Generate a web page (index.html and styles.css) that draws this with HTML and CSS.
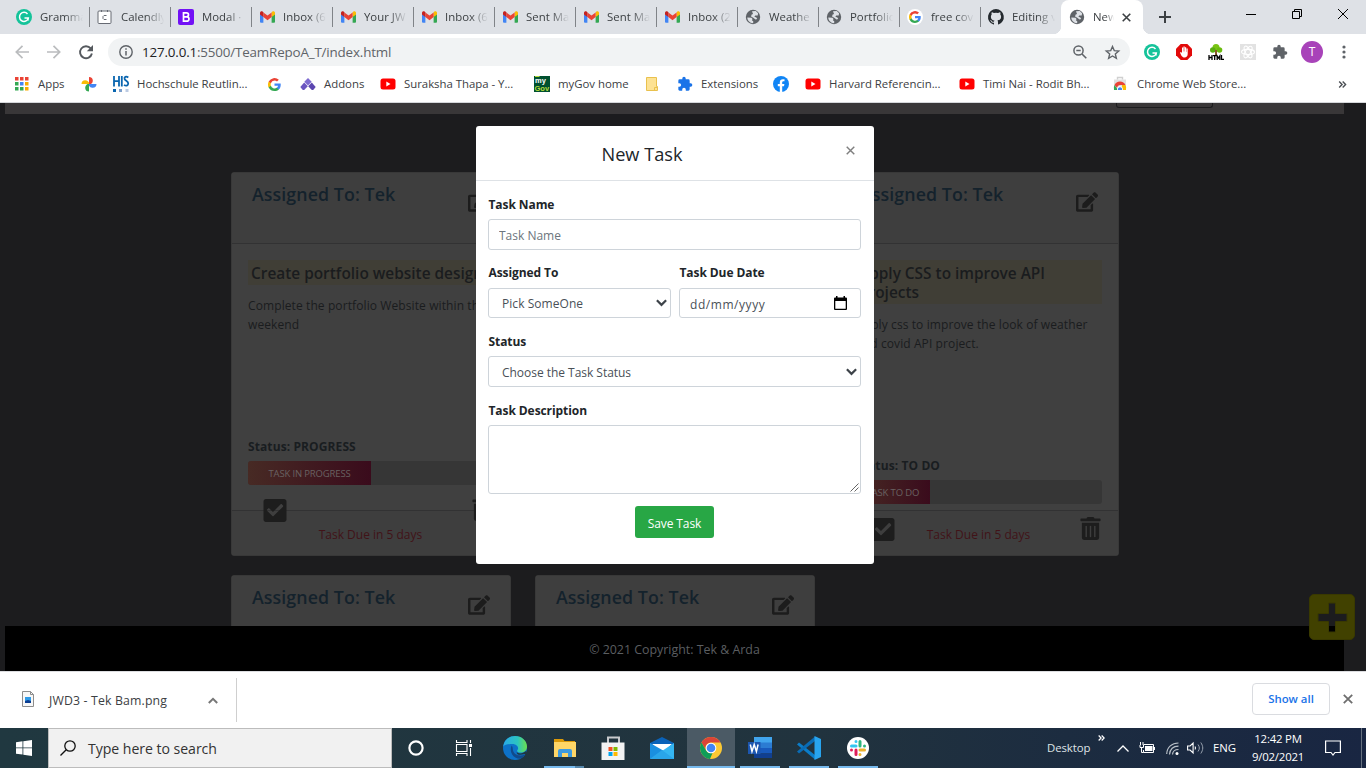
FILE: index.html
```html
<!DOCTYPE html>
<html lang="en">
<head>
<meta charset="utf-8">
<title>New Task</title>
<link rel="stylesheet" href="styles.css">
</head>
<body>
<svg class="defs" aria-hidden="true">
  <symbol id="gmail" viewBox="0 0 16 12"><path fill="#4285f4" d="M1 12h2.6V5.3L0 2.6V11a1 1 0 0 0 1 1z"/><path fill="#34a853" d="M12.4 12H15a1 1 0 0 0 1-1V2.6l-3.6 2.7z"/><path fill="#fbbc04" d="M12.4 1.2v4.9L16 3.4V1.8C16 .2 14.200-.6 13 .4z"/><path fill="#ea4335" d="M3.600 6.100V1.200L8 4.500l4.400-3.300v4.900L8 9.400z"/><path fill="#c5221f" d="M0 1.800v1.600l3.600 2.700V1.200L3 .4C1.800-.6 0 .2 0 1.800z"/></symbol>
  <symbol id="globe" viewBox="0 0 16 16"><circle cx="8" cy="8" r="7.200" fill="#5f6368"/><path fill="#dee1e6" d="M2.300 8.500l4.200.2 1 1.300-.6 1.500 1.300.5v2.300C4.500 14 2.300 11.300 2.300 8.500zM7 2.300l3.800-.2 2.300 2.100-.4 2.400-2.500-.2-.8 1.300 2 .7.8 1.500-1.700.5-2.600-1.800-1.700-.9.2-1.900 1.600-.8z"/></symbol>
  <symbol id="google" viewBox="0 0 24 24"><path fill="#4285f4" d="M23.500 12.300c0-.9-.1-1.600-.2-2.300H12v4.500h6.500a5.500 5.500 0 0 1-2.400 3.700v3h3.900c2.200-2.100 3.500-5.100 3.500-8.900z"/><path fill="#34a853" d="M12 24c3.200 0 6-1.100 8-2.900l-3.900-3a7.200 7.200 0 0 1-10.800-3.800h-4v3.100A12 12 0 0 0 12 24z"/><path fill="#fbbc05" d="M5.300 14.300a7.200 7.200 0 0 1 0-4.600V6.600h-4a12 12 0 0 0 0 10.800z"/><path fill="#ea4335" d="M12 4.800c1.800 0 3.300.6 4.600 1.800L20 3.200A12 12 0 0 0 1.300 6.600l4 3.100A7.100 7.100 0 0 1 12 4.800z"/></symbol>
  <symbol id="grammarly" viewBox="0 0 16 16"><circle cx="8" cy="8" r="8" fill="#15c39a"/><path fill="none" stroke="#fff" stroke-width="1.500" d="M11.500 5A4.500 4.500 0 1 0 12 10M8.500 9h3.800l-.5 2.500"/></symbol>
  <symbol id="youtube" viewBox="0 0 16 12"><rect width="15" height="11" x=".5" y=".5" rx="2.500" fill="#f00"/><path fill="#fff" d="M6.300 3.500v5l4.200-2.500z"/></symbol>
  <symbol id="puzzle" viewBox="0 0 24 24"><path fill="currentColor" d="M20.500 11H19V7a2 2 0 0 0-2-2h-4V3.500a2.500 2.500 0 0 0-5 0V5H4a2 2 0 0 0-2 2v3.800h1.500a2.700 2.700 0 0 1 0 5.400H2V20c0 1.100.9 2 2 2h3.800v-1.500a2.700 2.700 0 0 1 5.400 0V22H17a2 2 0 0 0 2-2v-4h1.500a2.500 2.500 0 0 0 0-5z"/></symbol>
  <symbol id="edit" viewBox="0 0 576 512"><path fill="currentColor" d="M402.600 83.200l90.200 90.200c3.800 3.800 3.800 10 0 13.800L274.400 405.600l-92.800 10.300c-12.400 1.400-22.900-9.100-21.500-21.500l10.300-92.800L388.800 83.200c3.800-3.800 10-3.800 13.800 0zm162-22.900l-48.800-48.800c-15.200-15.200-39.900-15.200-55.200 0l-35.400 35.400c-3.800 3.800-3.800 10 0 13.800l90.200 90.200c3.800 3.800 10 3.800 13.800 0l35.400-35.400c15.200-15.300 15.200-40 0-55.200zM384 346.200V448H64V128h229.800c3.200 0 6.200-1.300 8.500-3.500l40-40c7.600-7.600 2.200-20.500-8.500-20.500H48C21.500 64 0 85.500 0 112v352c0 26.500 21.500 48 48 48h352c26.500 0 48-21.500 48-48V306.200c0-10.700-12.900-16-20.500-8.500l-40 40c-2.200 2.300-3.500 5.300-3.500 8.500z"/></symbol>
  <symbol id="check" viewBox="0 0 448 448"><path fill="currentColor" d="M400 448H48c-26.500 0-48-21.500-48-48V48C0 21.500 21.500 0 48 0h352c26.500 0 48 21.500 48 48v352c0 26.500-21.500 48-48 48zM195.700 332.900l184-184c6.200-6.200 6.200-16.400 0-22.600l-22.600-22.600c-6.200-6.200-16.400-6.200-22.600 0L184.400 253.800l-70.100-70.100c-6.200-6.200-16.400-6.200-22.600 0l-22.600 22.600c-6.200 6.200-6.200 16.400 0 22.600l104 104c6.200 6.200 16.400 6.200 22.600 0z"/></symbol>
  <symbol id="trash" viewBox="0 0 448 512"><path fill="currentColor" d="M32 464a48 48 0 0 0 48 48h288a48 48 0 0 0 48-48V128H32zm272-256a16 16 0 0 1 32 0v224a16 16 0 0 1-32 0zm-96 0a16 16 0 0 1 32 0v224a16 16 0 0 1-32 0zm-96 0a16 16 0 0 1 32 0v224a16 16 0 0 1-32 0zM432 32H312l-9.400-18.700A24 24 0 0 0 281.100 0H166.800a24 24 0 0 0-21.400 13.300L136 32H16A16 16 0 0 0 0 48v32a16 16 0 0 0 16 16h416a16 16 0 0 0 16-16V48a16 16 0 0 0-16-16z"/></symbol>
  <symbol id="chev" viewBox="0 0 10 7"><path fill="none" stroke="currentColor" stroke-width="2" d="M.8 1L5 5.200 9.200 1"/></symbol>
  <symbol id="dbl" viewBox="0 0 9 8"><path fill="none" stroke="currentColor" stroke-width="1.600" d="M.7.7L4 4 .7 7.300M4.700.7L8 4 4.700 7.300"/></symbol>
  <symbol id="cross" viewBox="0 0 10 10"><path fill="none" stroke="currentColor" stroke-width="1.800" d="M.8.800l8.400 8.400M9.200.800L.8 9.200"/></symbol>
</svg>

<header class="tabs">
  <div class="tab"><svg class="fav"><use href="#grammarly"/></svg><span>Gramma</span></div>
  <div class="tab"><svg class="fav" viewBox="0 0 16 16"><rect x="1" y="2" width="13" height="12.500" rx="1" fill="#fff" stroke="#666a73"/><path stroke="#666a73" fill="none" d="M4.500 1v2M10.500 1v2M9.500 6.500H7L6 7.500v2l1 1h2.500"/></svg><span>Calendly</span></div>
  <div class="tab"><svg class="fav" viewBox="0 0 16 16"><rect width="16" height="16" rx="2" fill="#7211f5"/><path fill="none" stroke="#fff" stroke-width="1.700" d="M5.500 3.800h3a2 2 0 0 1 0 4h-3zM5.500 7.800h3.300a2.200 2.200 0 0 1 0 4.400H5.500z"/></svg><span>Modal ·</span></div>
  <div class="tab"><svg class="fav mail"><use href="#gmail"/></svg><span>Inbox (6</span></div>
  <div class="tab"><svg class="fav mail"><use href="#gmail"/></svg><span>Your JW</span></div>
  <div class="tab"><svg class="fav mail"><use href="#gmail"/></svg><span>Inbox (6</span></div>
  <div class="tab"><svg class="fav mail"><use href="#gmail"/></svg><span>Sent Ma</span></div>
  <div class="tab"><svg class="fav mail"><use href="#gmail"/></svg><span>Sent Ma</span></div>
  <div class="tab"><svg class="fav mail"><use href="#gmail"/></svg><span>Inbox (2</span></div>
  <div class="tab"><svg class="fav"><use href="#globe"/></svg><span>Weathe</span></div>
  <div class="tab"><svg class="fav"><use href="#globe"/></svg><span>Portfolio</span></div>
  <div class="tab"><svg class="fav" viewBox="0 0 16 16"><circle cx="8" cy="8" r="8" fill="#fff"/><use href="#google" x="2" y="2" width="12" height="12"/></svg><span>free cov</span></div>
  <div class="tab"><svg class="fav" viewBox="0 0 16 16"><path fill="#24292e" d="M8 0a8 8 0 0 0-2.500 15.600c.4.100.5-.2.500-.4v-1.500c-2.200.5-2.700-.9-2.700-.9-.4-.9-.9-1.200-.9-1.200-.7-.5.100-.5.100-.5.800.1 1.200.8 1.200.8.700 1.300 1.900.9 2.300.7.100-.5.300-.9.500-1.100-1.800-.2-3.600-.9-3.600-4 0-.9.300-1.600.8-2.100-.1-.2-.4-1 .1-2.100 0 0 .7-.2 2.200.8a7.500 7.500 0 0 1 4 0c1.500-1 2.200-.8 2.200-.8.400 1.100.200 1.900.1 2.100.5.600.8 1.300.8 2.100 0 3.100-1.900 3.700-3.700 3.900.3.300.6.800.6 1.500v2.200c0 .2.100.5.600.4A8 8 0 0 0 8 0z"/></svg><span>Editing v</span></div>
  <div class="tab active"><svg class="fav"><use href="#globe"/></svg><span>New</span><svg class="tabx"><use href="#cross"/></svg></div>
  <svg class="newtab" viewBox="0 0 12 12"><path stroke="#3c4043" stroke-width="2" d="M6 0v12M0 6h12"/></svg>
  <div class="winctl">
    <svg viewBox="0 0 10 10"><path stroke="#000" d="M0 5.500h10"/></svg>
    <svg viewBox="0 0 10 10"><path fill="none" stroke="#000" d="M.5 2.500h7v7h-7zM2.500 2.500v-2h7v7h-2"/></svg>
    <svg viewBox="0 0 10 10"><path stroke="#000" d="M0 0l10 10M10 0L0 10"/></svg>
  </div>
</header>

<div class="toolbar">
  <svg class="nav" viewBox="0 0 14 14"><path fill="none" stroke="#babcbe" stroke-width="1.700" d="M14 7H1.500M7.500.8L1.300 7l6.200 6.200"/></svg>
  <svg class="nav" viewBox="0 0 14 14"><path fill="none" stroke="#babcbe" stroke-width="1.700" d="M0 7h12.500M6.500.8L12.700 7l-6.200 6.200"/></svg>
  <svg class="nav" viewBox="0 0 14 14"><path fill="none" stroke="#55595e" stroke-width="1.900" d="M11.700 3.400A6 6 0 1 0 12.900 8.500"/><path fill="#55595e" d="M14 0v6.200H7.800z"/></svg>
  <div class="omnibox">
    <svg class="info" viewBox="0 0 14 14"><circle cx="7" cy="7" r="6.200" fill="none" stroke="#5f6368" stroke-width="1.400"/><path stroke="#5f6368" stroke-width="1.500" d="M7 6v4.500M7 3.300v1.500"/></svg>
    <span class="url"><b>127.0.0.1</b>:5500/TeamRepoA_T/index.html</span>
    <svg class="lens" viewBox="0 0 14 14"><circle cx="5.500" cy="5.500" r="4.600" fill="none" stroke="#5f6368" stroke-width="1.500"/><path stroke="#5f6368" stroke-width="1.600" d="M9 9l4.300 4.300M3.300 5.500h4.400"/></svg>
    <svg class="star" viewBox="0 0 24 24"><path fill="none" stroke="#5f6368" stroke-width="2.200" d="M12 2.500l2.800 6.500 7.200.6-5.500 4.700 1.700 7-6.200-3.800-6.200 3.800 1.700-7L2 9.600 9.200 9z"/></svg>
  </div>
  <div class="exts">
    <svg viewBox="0 0 16 16"><use href="#grammarly"/></svg>
    <svg viewBox="0 0 16 16"><path fill="#e20a0a" d="M4.700 0h6.600L16 4.700v6.600L11.300 16H4.700L0 11.300V4.700z"/><path fill="#fff" d="M4 8.500l1-.5 1 1V3.500h1.200v4h.3v-5h1.200v5H9v-4.300h1.200V8h.3V4.500h1.200V10c0 2-1.300 3.500-3.200 3.500C6 13.500 5 11 4 8.500z"/></svg>
    <svg viewBox="0 0 16 16"><circle cx="8" cy="3.500" r="3.500" fill="#79c413"/><circle cx="4.800" cy="6" r="2.800" fill="#59ad10"/><circle cx="11.500" cy="6" r="2.800" fill="#6abb0e"/><path stroke="#8b5a2b" stroke-width="2" d="M8 6v6"/><path stroke="#000" stroke-width="1.300" fill="none" d="M1 11v5M4 11v5M1 13.500h3M5 11.700h3.500M6.700 11.500V16M9.200 16v-4l1.300 2 1.300-2v4M13.500 11v4.300H16"/></svg>
    <svg viewBox="0 0 16 16"><rect width="16" height="16" fill="#e2e2e2"/><g fill="none" stroke="#fff" stroke-width="1.100"><ellipse cx="8" cy="8" rx="6.500" ry="2.600"/><ellipse cx="8" cy="8" rx="6.500" ry="2.600" transform="rotate(60 8 8)"/><ellipse cx="8" cy="8" rx="6.500" ry="2.600" transform="rotate(120 8 8)"/></g></svg>
    <svg class="pz"><use href="#puzzle"/></svg>
    <div class="avatar">T</div>
    <svg viewBox="0 0 16 16"><g fill="#5f6368"><circle cx="8" cy="3" r="1.600"/><circle cx="8" cy="8" r="1.600"/><circle cx="8" cy="13" r="1.600"/></g></svg>
  </div>
</div>

<nav class="bookmarks">
  <div class="bm"><svg viewBox="0 0 16 16"><g fill="#ea4335"><path d="M0 1h3.500v3.500H0zM5 1h3.500v3.500H5zM10 1h3.500v3.500H10z"/></g><path fill="#34a853" d="M0 6h3.500v3.500H0zM0 11h3.500v3.500H0zM5 11h3.500v3.500H5z"/><path fill="#4285f4" d="M5 6h3.500v3.500H5z"/><path fill="#f9ab00" d="M10 6h3.500v3.500H10zM10 11h3.500v3.500H10z"/></svg>Apps</div>
  <div class="bm"><svg viewBox="0 0 16 16"><path fill="#ea4335" d="M8 8V1a3.800 3.800 0 0 1 3.800 3.700c0 1.500-.8 2.600-2 3.300z"/><path fill="#4285f4" d="M8 8h7.500a3.800 3.800 0 0 1-3.700 3.800A3.700 3.700 0 0 1 8 9.800z"/><path fill="#34a853" d="M8 8v7.500A3.800 3.800 0 0 1 4.200 12C4.200 10 5 9 6.500 8z"/><path fill="#fbbc04" d="M8 8H.5a3.800 3.800 0 0 1 3.700-3.800c2 0 3 1 3.800 2.300z"/></svg></div>
  <div class="bm"><svg viewBox="0 0 16 16"><g fill="none" stroke="#0a66b0" stroke-width="1.800"><path d="M1 0v10.500M6 0v10.500M1 5.200h5M8.800 0v10.500"/><path d="M15.300 1.500C13-.3 11 1 11.600 3c.6 1.900 3.400 2 3.600 4.400.1 2.300-2.300 2.900-4.200 1.500"/></g><path fill="#0a66b0" d="M0 13h3v3H0z"/><path fill="#7b9ecb" d="M6 13h3v3H6z"/><path fill="#bccbe3" d="M12.500 13h3v3h-3z"/></svg>Hochschule Reutlin...</div>
  <div class="bm"><svg class="g12"><use href="#google"/></svg></div>
  <div class="bm"><svg viewBox="0 0 16 16"><path fill="#7e6bd0" d="M8 2l3.700 3.700L8 9.400 4.300 5.700z"/><path fill="#6a55c0" d="M4.200 6.500L7.800 10.200 4.200 14H2.800L.3 11z"/><path fill="#5b46b0" d="M11.800 6.500L15.700 11l-2.500 3h-1.400L8.200 10.200z"/></svg>Addons</div>
  <div class="bm"><svg class="yt"><use href="#youtube"/></svg>Suraksha Thapa - Y...</div>
  <div class="bm"><svg viewBox="0 0 16 16"><path fill="#00502f" d="M0 0h16v16H0z"/><path fill="#b5dc3a" d="M1 0h4l1 1H1z"/><g font-family="Liberation Sans" font-weight="700" font-size="7.500"><text x="1" y="6.500" fill="#fff">my</text><text x=".5" y="14.600" fill="#b5dc3a">Gov</text></g></svg>myGov home</div>
  <div class="bm"><svg viewBox="0 0 16 16"><path fill="#fde293" stroke="#e9c14e" d="M.5 1.500h10v9l1 0v4H.5zM8.500 14.500v-3h2.500"/></svg></div>
  <div class="bm blue"><svg class="pz"><use href="#puzzle"/></svg>Extensions</div>
  <div class="bm"><svg viewBox="0 0 16 16"><circle cx="8" cy="8" r="8" fill="#1185f5"/><path fill="#fff" d="M6.800 16v-5.700H4.800V8h2V6.300c0-2 1.200-3.100 3-3.100l1.700.1v2h-1c-1 0-1.300.6-1.300 1.200V8h2.200l-.4 2.300H9.200V16z"/></svg></div>
  <div class="bm"><svg class="yt"><use href="#youtube"/></svg>Harvard Referencin...</div>
  <div class="bm"><svg class="yt"><use href="#youtube"/></svg>Timi Nai - Rodit Bh...</div>
  <div class="bm"><svg viewBox="0 0 16 16"><path fill="#e0e0e0" d="M1 3.500h12V14H1z"/><path fill="none" stroke="#d0d0d0" stroke-width="1.400" d="M4.500 3.500V1.500h5v2"/><path fill="#ea4335" d="M1.500 9a6 6 0 0 1 11 0H7a3 3 0 0 0-2.500 1.500L4 12z"/><path fill="#34a853" d="M1.500 9A7 7 0 0 0 1 14h4z"/><path fill="#fbbc04" d="M9 9h3.500a7 7 0 0 1 .5 5H9z"/><path fill="#fff" d="M4.200 14a2.900 2.900 0 1 1 5.600 0z"/><path fill="#4285f4" d="M5 14a2.100 2.100 0 1 1 4 0z"/></svg>Chrome Web Store...</div>
  <svg class="more"><use href="#dbl"/></svg>
</nav>

<main class="page">
  <div class="navbar"><div class="navbtn"></div></div>
  <section class="cards">
    <article class="card">
      <div class="card-head"><h2>Assigned To: Tek</h2><svg class="edit"><use href="#edit"/></svg></div>
      <div class="card-body">
        <h3>Create portfolio website design</h3>
        <p>Complete the portfolio Website within the<br>weekend</p>
        <strong>Status: PROGRESS</strong>
        <div class="progress"><div class="bar" style="width:50%">TASK IN PROGRESS</div></div>
        <div class="acts"><svg class="check"><use href="#check"/></svg><svg class="trash"><use href="#trash"/></svg></div>
      </div>
      <div class="card-foot">Task Due in 5 days</div>
    </article>
    <article class="card"></article>
    <article class="card third">
      <div class="card-head"><h2>Assigned To: Tek</h2><svg class="edit"><use href="#edit"/></svg></div>
      <div class="card-body">
        <h3>Apply CSS to improve API projects</h3>
        <p>Apply css to improve the look of weather<br>and covid API project.</p>
        <strong>Status: TO DO</strong>
        <div class="progress"><div class="bar" style="width:30%">TASK TO DO</div></div>
        <div class="acts"><svg class="check"><use href="#check"/></svg><svg class="trash"><use href="#trash"/></svg></div>
      </div>
      <div class="card-foot">Task Due in 5 days</div>
    </article>
    <article class="card"><div class="card-head"><h2>Assigned To: Tek</h2><svg class="edit"><use href="#edit"/></svg></div></article>
    <article class="card"><div class="card-head"><h2>Assigned To: Tek</h2><svg class="edit"><use href="#edit"/></svg></div></article>
  </section>
  <footer class="site-foot">© 2021 Copyright: Tek &amp; Arda</footer>
  <svg class="fab" viewBox="0 0 46 46"><path fill="#414100" fill-rule="evenodd" stroke="#393900" d="M5 .5h36a4.500 4.500 0 0 1 4.500 4.500v36a4.500 4.500 0 0 1-4.500 4.500H5A4.500 4.500 0 0 1 .5 41V5A4.500 4.500 0 0 1 5 .5zM19.500 9v10.500H9v8h10.500V38h7V27.500H38v-8H26.500V9z"/></svg>

  <div class="modal">
    <div class="modal-head"><h1>New Task</h1><svg class="close" viewBox="0 0 10 10"><path stroke="#7f7f7f" stroke-width="1.600" d="M.8.800l8.400 8.400M9.200.800L.8 9.200"/></svg></div>
    <form class="modal-body">
      <div class="field"><label>Task Name</label><input class="ctl" placeholder="Task Name"></div>
      <div class="row">
        <div class="field"><label>Assigned To</label><div class="ctl select">Pick SomeOne<svg class="arrow"><use href="#chev"/></svg></div></div>
        <div class="field"><label>Task Due Date</label><div class="ctl date">dd/mm/yyyy<svg class="cal" viewBox="0 0 13 14"><path fill="#000" fill-rule="evenodd" d="M1 1.500h1V0h1.500v1.500h6V0H11v1.500h1a1 1 0 0 1 1 1V13a1 1 0 0 1-1 1H1a1 1 0 0 1-1-1V2.500a1 1 0 0 1 1-1zM1.300 5v7.700h10.400V5z"/></svg></div></div>
      </div>
      <div class="field"><label>Status</label><div class="ctl select wide">Choose the Task Status<svg class="arrow"><use href="#chev"/></svg></div></div>
      <div class="field"><label>Task Description</label><div class="ctl area"><svg viewBox="0 0 9 9"><path stroke="#555" stroke-width=".9" d="M.5 8.500l8-8M4.500 8.500l4-4"/></svg></div></div>
      <button class="save" type="button">Save Task</button>
    </form>
  </div>
</main>

<div class="downloads">
  <div class="dl">
    <svg class="file" viewBox="0 0 12 16"><path fill="#f7f7f7" stroke="#8d8d8d" d="M.5.500h8l3 3v12H.5z"/><path fill="none" stroke="#8d8d8d" d="M8.500.500v3h3"/><path fill="#2f9be8" d="M3 6h6v6H3z"/><path fill="#0b3d91" d="M3 10l3-1 3 1v2H3z"/></svg>
    <span>JWD3 - Tek Bam.png</span>
    <svg class="up"><use href="#chev"/></svg>
  </div>
  <div class="showall">Show all</div>
  <svg class="dlx"><use href="#cross"/></svg>
</div>

<div class="taskbar">
  <div class="tb"><svg width="16" height="16" viewBox="0 0 16 16"><path fill="#fff" d="M0 2.200L6.500 1.300v6.200H0zM7.300 1.200L16 0v7.500H7.300zM0 8.300h6.500v6.300L0 13.700zM7.300 8.300H16V16l-8.700-1.200z"/></svg></div>
  <div class="search"><svg viewBox="0 0 16 16"><circle cx="10" cy="6" r="5.200" fill="none" stroke="#111" stroke-width="1.300"/><path stroke="#111" stroke-width="1.300" d="M6.200 9.800L.5 15.500"/></svg><span>Type here to search</span></div>
  <div class="tb"><svg width="16" height="16" viewBox="0 0 16 16"><circle cx="8" cy="8" r="6.600" fill="none" stroke="#fff" stroke-width="2.200"/></svg></div>
  <div class="tb tview"><svg width="16" height="16" viewBox="0 0 16 16"><path fill="none" stroke="#fff" stroke-width="1.100" d="M.5 4.500h10.500v7H.5zM.5 0v2.500H11V0M.5 16v-2.500H11V16M14.500 0v3M14.500 8v8"/><path fill="#fff" d="M13 4h3v3h-3z"/></svg></div>
  <div class="tb"><svg width="24" height="24" viewBox="0 0 24 24"><defs><linearGradient id="eg"><stop stop-color="#2aa9e8"/><stop offset=".6" stop-color="#2cc5c0"/><stop offset="1" stop-color="#6be04c"/></linearGradient></defs><circle cx="12" cy="12" r="12" fill="#0d72c8"/><path fill="url(#eg)" d="M.2 10.500C1 4 6 0 12 0c7 0 12 5 12 10.500 0 4-3 6-6 6-4 0-4.500-1.500-3.500-2.500 1.800-2-.5-6-5-6C5 8 1.500 9 .2 10.500z"/><path fill="#114a8b" d="M8.500 9.500C6 16 10 22.500 17 22.800c2-.8 4-2.500 5-4.300-5 2.200-11 .5-12-4-.4-2 0-4-1.500-5z"/><path fill="#203640" d="M22 18c-5 1.500-8.500 1-8.300-2 1.500 2 6 2 9.300-1l1 2-.8 1.500z"/></svg></div>
  <div class="tb"><svg width="22" height="18" viewBox="0 0 22 18"><path fill="#dc9a09" d="M0 0h9l1.500 2H21v8H0z"/><path fill="#ffd667" d="M0 3h22v15H0z"/><path fill="#3e9be0" d="M4 18v-6a2 2 0 0 1 2-2h10a2 2 0 0 1 2 2v6h-4v-4H8v4z"/></svg><i class="line split"></i></div>
  <div class="tb"><svg width="24" height="24" viewBox="0 0 24 24"><path fill="none" stroke="#c9cbce" stroke-width="2" d="M7 7V1.500h11V7"/><path fill="#f3f3f3" d="M.5 6.500h23V24H.5z"/><path fill="#f25022" d="M7.500 11h4v4h-4z"/><path fill="#7fba00" d="M12.500 11h4v4h-4z"/><path fill="#00a4ef" d="M7.500 16h4v4h-4z"/><path fill="#ffb900" d="M12.500 16h4v4h-4z"/></svg></div>
  <div class="tb"><svg width="24" height="22" viewBox="0 0 24 22"><path fill="#0a62b8" d="M0 6l12-6 12 6v6H0z"/><path fill="#fff" d="M2 7h20l-8 7.500h-4z"/><path fill="#1a8fe0" d="M0 6l14 8-14 8z"/><path fill="#35b6f2" d="M24 6L0 22h24z"/><path fill="#2aa5ea" d="M0 22h24L12 13z"/></svg></div>
  <div class="tb on"><svg width="24" height="24" viewBox="0 0 24 24"><circle cx="12" cy="12" r="11" fill="#fcc934"/><path fill="#db4437" d="M12 1a11 11 0 0 1 9.500 5.500H12A5.500 5.500 0 0 0 7 14.500L2.500 6.500A11 11 0 0 1 12 1z"/><path fill="#0f9d58" d="M2.500 6.500l4.700 8.300A5.500 5.500 0 0 0 13.500 17L11 23A11 11 0 0 1 2.500 6.500z"/><circle cx="12" cy="12" r="5.300" fill="#fff"/><circle cx="12" cy="12" r="4.300" fill="#4285f4"/></svg><i class="line full"></i></div>
  <div class="tb"><svg width="24" height="22" viewBox="0 0 24 22"><path fill="#41a5ee" d="M6 0h18v6H6z"/><path fill="#2b7cd3" d="M6 5.500h18V11H6z"/><path fill="#185abd" d="M6 11h18v5.500H6z"/><path fill="#103f91" d="M6 16.500h18V21H6z"/><path fill="#1c56b0" d="M0 5h12.500v12H0z"/><path fill="none" stroke="#fff" stroke-width="1.500" d="M2.300 7.500l1.700 7 2.200-7 2.200 7 1.700-7"/></svg><i class="line"></i></div>
  <div class="tb"><svg width="24" height="24" viewBox="0 0 24 24"><path fill="#0b7dc9" d="M0 8.500L2 6.500l16 12.500v4.500z"/><path fill="#0a6cb5" d="M0 15.500l2 2L18 5V.500z"/><path fill="#28a4ee" d="M17.500 0L24 3v18l-6.500 3z"/></svg><i class="line"></i></div>
  <div class="tb"><svg width="24" height="24" viewBox="0 0 24 24"><circle cx="12" cy="12" r="11" fill="#fff"/><g fill="none" stroke-width="3" stroke-linecap="round"><path stroke="#36c5f0" d="M5.500 10h4.500M10 5.500h0"/><path stroke="#2eb67d" d="M14 5.500V10M18.500 10h0"/><path stroke="#ecb22e" d="M14 14h4.500M14 18.500h0"/><path stroke="#e01e5a" d="M10 14v4.500M5.500 14h0"/></g></svg><i class="line"></i></div>
  <div class="tray">
    <span class="desk">Desktop</span>
    <svg class="tmore"><use href="#dbl"/></svg>
    <svg width="12" height="7" class="tup" viewBox="0 0 12 7"><path fill="none" stroke="#fff" stroke-width="1.300" d="M.5 6.500L6 1l5.500 5.500"/></svg>
    <svg width="16" height="12" class="bat" viewBox="0 0 16 12"><path fill="none" stroke="#fff" d="M4.500 2.500h10v8h-10V8M2.500 6v4.500h2M1 3v2.500h3.500V3M1.500 0v3M4 0v3"/><path fill="#fff" d="M6 4h7.500v5H6zM15 5h1v3h-1z"/></svg>
    <svg width="13" height="13" class="wifi" viewBox="0 0 13 13"><path fill="none" stroke="#b9c0c8" stroke-width="1.200" d="M.7 12C1 5 6 1 12.500 1M3.500 12.500C4 7.500 7.500 4.300 12.500 4.200M6.500 12.500c.2-3 2.500-5 6-5"/><circle cx="11" cy="11.500" r="1.500" fill="#fff"/></svg>
    <svg width="17" height="12" class="spk" viewBox="0 0 17 12"><path fill="none" stroke="#fff" stroke-width="1.100" d="M.6 4v4h2.500l3 3V1l-3 3zM8 4.500c.7 1 .7 2 0 3"/><path fill="none" stroke="#9aa3b0" d="M11 2.500c1.800 2.400 1.800 4.600 0 7M13.800.500c2.600 3.800 2.600 7.200 0 11"/></svg>
    <span class="eng">ENG</span>
    <div class="clock"><span>12:42 PM</span><span>9/02/2021</span></div>
    <svg width="16" height="16" class="note" viewBox="0 0 16 16"><path fill="none" stroke="#fff" stroke-width="1.200" d="M.6 1h14.800v11.500H10L8 15l-2-2.500H.6z"/></svg>
  </div>
</div>
</body>
</html>
```
FILE: styles.css
```css
* { box-sizing: border-box; }
body { margin: 0; width: 1366px; height: 768px; overflow: hidden; display: flex; flex-direction: column; background: #fff; font: 11.4px/16px "Open Sans", "Noto Sans", sans-serif; color: #3c4043; }
svg { display: block; flex: none; overflow: visible; }
h1, h2, h3, p { margin: 0; }
.defs { position: absolute; width: 0; height: 0; }

/* browser tabs */
.tabs { flex: none; height: 34px; display: flex; align-items: center; background: #dee1e6; padding-left: 9px; }
.tab { flex: none; width: 81px; display: flex; align-items: center; padding-left: 7px; height: 20px; border-right: 1px solid #808388; }
.tab:nth-child(13) { border-right-color: transparent; }
.tab span { width: 45px; margin-left: 8px; overflow: hidden; white-space: nowrap; -webkit-mask-image: linear-gradient(90deg, #000 55%, transparent 96%); }
.fav { width: 16px; height: 16px; }
.fav.mail { width: 15px; height: 12px; margin: 0 0 0 1px; }
.tab.active { position: relative; height: 34px; width: 82px; margin-left: -1px; padding-left: 8px; background: #fff; border: 0; border-radius: 8px 8px 0 0; }
.tab.active::before, .tab.active::after { content: ""; position: absolute; bottom: 0; width: 8px; height: 8px; }
.tab.active::before { left: -8px; background: radial-gradient(circle at 0 0, #dee1e6 8px, #fff 8.500px); }
.tab.active::after { right: -8px; background: radial-gradient(circle at 100% 0, #dee1e6 8px, #fff 8.500px); }
.tab.active span { width: 22px; }
.tabx { width: 9px; height: 9px; margin-left: 7px; color: #3c4043; }
.newtab { width: 12px; height: 12px; margin-left: 16px; }
.winctl { display: flex; gap: 36px; margin: 0 18px 6px auto; }
.winctl svg { width: 10px; height: 10px; }

/* toolbar */
.toolbar { flex: none; height: 36px; display: flex; align-items: center; padding-left: 15px; }
.nav { width: 14px; height: 14px; margin-right: 18px; }
.nav:nth-child(3) { margin-right: 15px; }
.omnibox { width: 1022px; height: 28px; border-radius: 14px; background: #f1f3f4; display: flex; align-items: center; padding: 0 10px 0 11px; }
.info { width: 14px; height: 14px; margin-right: 9px; }
.url { flex: 1; font-size: 13.400px; color: #5f6368; letter-spacing: -.17px; }
.url b { font-weight: 400; color: #202124; }
.lens { width: 14px; height: 14px; margin-right: 18px; }
.star { width: 15px; height: 15px; }
.exts { display: flex; align-items: center; gap: 16px; margin-left: 14px; }
.exts svg { width: 16px; height: 16px; }
.avatar { width: 22px; height: 22px; margin: 0 -3px; border-radius: 50%; background: #a843b9; color: #fff; text-align: center; line-height: 22px; font-size: 12px; }
.exts .pz { color: #5f6368; }

/* bookmarks */
.bookmarks { flex: none; height: 33px; border-bottom: 1px solid #d5d7da; padding: 0 0 4px 15px; display: grid; grid-template-columns: 66px 32px 155px 32px 80px 154px 112px 31px 96px 32px 154px 154px 225px 10px; align-items: center; }
.bm { display: flex; align-items: center; gap: 8px; white-space: nowrap; letter-spacing: -.02px; }
.bm:first-child { gap: 7px; }
.bm svg { width: 16px; height: 16px; }
.bm .yt { height: 12px; }
.bm .g12 { width: 13px; height: 13px; }
.blue svg { color: #1a73e8; }
.more { width: 9px; height: 7px; color: #4b4f54; }

/* web page behind the dialog */
.page { position: relative; flex: none; height: 568px; background: #1c1c1e; overflow: hidden; color: #191a1b; font-size: 12px; }
.navbar { height: 11px; margin: 0 22px 0 5px; background: #393738; }
.navbtn { margin-left: 1111px; width: 97px; height: 5px; border: 1px solid #1c1c1e; border-top: 0; border-radius: 0 0 3px 3px; }
.cards { margin: 58px 0 0 231px; display: grid; grid-template-columns: repeat(3, 280px); grid-auto-rows: 384px; gap: 19px 24px; }
.card { background: #404040; border: 1px solid #383838; border-radius: 3px; display: flex; flex-direction: column; }
.card-head { flex: none; height: 71px; padding: 8px 20px 0 20px; background: #3e3e3e; border-bottom: 1px solid #323233; display: flex; justify-content: space-between; }
.card h2 { font-size: 17.800px; line-height: 26px; font-weight: 600; letter-spacing: .08px; color: #14222c; }
.edit { width: 22px; height: 20px; margin-top: 11px; color: #1c1c1c; }
.card-body { height: 266px; padding: 16px 16px 0; color: #1a1c1e; }
.card h3 { background: #403e36; padding: 4px 2px 2px 3px; font-size: 15.400px; line-height: 19px; font-weight: 600; white-space: nowrap; overflow: hidden; }
.third h3 { white-space: normal; padding-right: 40px; }
.card p { margin: 11px 0 105px; line-height: 19px; height: 38px; white-space: nowrap; letter-spacing: .1px; }
.card strong { display: block; height: 16px; margin-bottom: 5px; letter-spacing: .1px; color: #191d20; }
.progress { height: 24px; margin-top: 6px; border-radius: 3px; background: #363636; overflow: hidden; }
.bar { height: 24px; line-height: 25px; text-align: center; font-size: 9.500px; letter-spacing: -.15px; color: #696161; background: linear-gradient(90deg, #472a24, #3a0b1c); }
.acts { position: relative; display: flex; justify-content: space-between; margin: 14px -6px 0 15px; color: #1d1d1d; }
.check { width: 24px; height: 23px; }
.trash { width: 21px; height: 23px; margin: -1px 7px 0 0; }
.card-foot { flex: 1; border-top: 1px solid #323233; background: #3e3e3e; padding: 16px 1px 0 0; text-align: center; color: #411318; }
.site-foot { position: absolute; left: 5px; right: 22px; bottom: 0; height: 45px; line-height: 47px; background: #000; color: #5b5e61; text-align: center; font-size: 12.400px; }
.fab { position: absolute; left: 1309px; top: 491px; width: 46px; height: 46px; }

/* dialog */
.modal { position: absolute; left: 476px; top: 23px; width: 398px; height: 438px; background: #fff; border-radius: 3px; color: #212529; }
.modal-head { height: 55px; border-bottom: 1px solid #dee2e6; display: flex; padding: 15px 19px 0 0; }
.modal h1 { flex: 1; margin-right: 38px; text-align: center; font-size: 18.200px; line-height: 26px; font-weight: 500; }
.close { width: 9px; height: 9px; margin-top: 5px; }
.modal-body { padding: 14px 13px 0 12px; display: flex; flex-direction: column; }
.field label { display: block; height: 24px; line-height: 19px; font-weight: 700; font-size: 12px; letter-spacing: -.08px; padding-left: .5px; }
.row .field label { line-height: 18px; }
.field { margin-bottom: 14px; }
.row { display: grid; grid-template-columns: 183px 182px; gap: 8px; }
.row .ctl { height: 30px; }
.ctl { display: flex; align-items: center; justify-content: space-between; width: 100%; height: 31px; border: 1px solid #ced4da; border-radius: 3px; padding: 1px 10px 0; color: #495057; font: 12px/18px "Open Sans", "Noto Sans", sans-serif; outline: 0; }
.ctl::placeholder { color: #6c757d; opacity: 1; }
.select { padding: 1px 3px 0 13px; letter-spacing: .05px; }
.wide { padding-top: 2px; letter-spacing: -.03px; }
.arrow { width: 11px; height: 8px; margin-top: -1px; color: #3d4349; }
.date { padding-top: 3px; letter-spacing: .55px; }
.cal { width: 13px; height: 14px; margin: -4px 3px 0 0; }
.ctl.area { height: 69px; align-items: flex-end; justify-content: flex-end; padding: 1px; }
.area svg { width: 9px; height: 9px; }
.save { align-self: center; width: 79px; height: 32px; margin: -2px 0 0; border: 0; border-radius: 3px; padding: 3px 0 0; background: #28a745; color: #fff; font: 12px/18px "Open Sans", "Noto Sans", sans-serif; letter-spacing: -.1px; }

/* downloads shelf */
.downloads { flex: none; height: 57px; border-top: 1px solid #dcdde0; display: flex; align-items: center; background: #fff; }
.dl { width: 237px; height: 44px; border-right: 1px solid #cfcfcf; display: flex; align-items: center; padding-left: 22px; font-size: 12.300px; }
.file { width: 12px; height: 16px; margin: -2px 15px 0 0; }
.dl span { width: 159px; padding-top: 2px; letter-spacing: .15px; }
.up { width: 10px; height: 7px; color: #777; transform: rotate(180deg); }
.showall { margin: -2px 13px 0 auto; width: 78px; height: 32px; line-height: 30px; border: 1px solid #dadce0; border-radius: 4px; text-align: center; color: #1a73e8; font-weight: 600; font-size: 11.400px; }
.dlx { width: 10px; height: 10px; margin: -2px 13px 0 0; color: #6e6e6e; }

/* taskbar */
.taskbar { flex: none; height: 40px; display: grid; grid-template-columns: 48px 344px 48px 49px 52px 48px 48px 50px 48px 49px 49px 49px 484px; background: linear-gradient(90deg, #203840, #21333e 60%, #1c2c40 78%, #192642); color: #fff; }
.tb { position: relative; display: flex; align-items: center; justify-content: center; }
.tview { padding-right: 2px; }
.on { background: #4b5a65; }
.search { background: #f1f1f1; border: 1px solid #bcbcbc; display: flex; align-items: center; gap: 12px; padding-left: 11px; color: #333; font-size: 14.100px; letter-spacing: -.04px; }
.search svg { width: 16px; height: 16px; }
.search span { padding-top: 2px; }
.line { position: absolute; bottom: 0; left: 5px; width: 40px; height: 2px; background: #76b9ed; }
.full { left: 0; width: 48px; }
.split { left: 3px; background: linear-gradient(90deg, #76b9ed 31px, #5587ab 31px); }
.tray { position: relative; display: flex; align-items: center; padding-left: 165px; font-size: 11.400px; }
.tray::after { content: ""; position: absolute; right: 4px; top: 0; width: 1px; height: 40px; background: #66717f; }
.desk { width: 50px; color: #dfe3e6; letter-spacing: -.1px; }
.tmore { width: 9px; height: 6px; margin: -21px 11px 0 0; }
.tup { margin-right: 10px; }
.bat { margin-right: 11px; }
.wifi { margin-right: 8px; }
.spk { margin-right: 9px; }
.eng { width: 34px; letter-spacing: -.1px; }
.clock { width: 62px; margin-right: 16px; display: flex; flex-direction: column; align-items: center; line-height: 18px; letter-spacing: -.2px; }
```
